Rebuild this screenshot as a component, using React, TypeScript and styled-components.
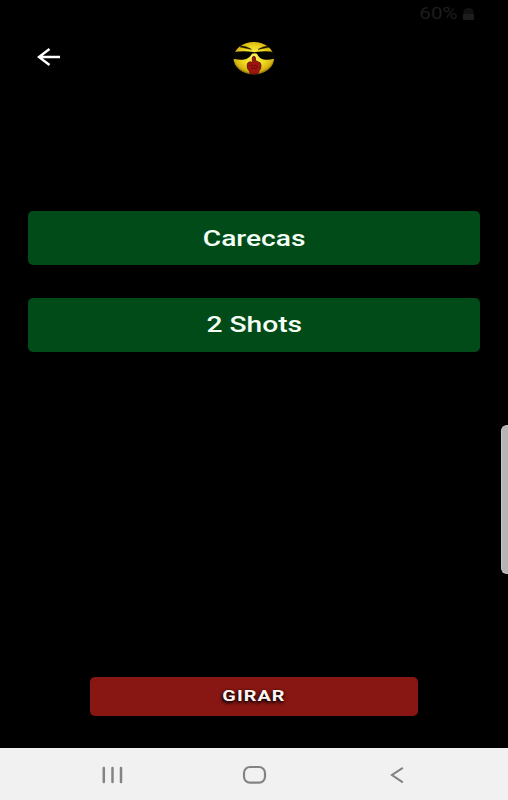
import React from "react";
import styled, { createGlobalStyle } from "styled-components";

const GlobalStyle = createGlobalStyle`
  * { box-sizing: border-box; }
  html, body { margin: 0; padding: 0; background: #000; }
  body { font-family: Roboto, "Liberation Sans", sans-serif; overflow: hidden; }
`;

const Screen = styled.main`
  position: relative;
  width: 508px;
  height: 800px;
  display: flex;
  flex-direction: column;
  background: #000;
  overflow: hidden;
`;

const StatusBar = styled.div`
  height: 28px;
  padding: 0 33px 1px 0;
  display: flex;
  align-items: center;
  justify-content: flex-end;
  gap: 4px;
  color: #1d1d1d;
`;

const Battery = styled.span`
  font-size: 16.5px;
  line-height: 20px;
  transform: scaleX(1.25);
  transform-origin: right center;
`;

const Header = styled.header`
  height: 60px;
  padding: 0 36px;
  display: grid;
  grid-template-columns: 1fr 42px 1fr;
  align-items: center;
`;

const BackButton = styled.button`
  width: 26px;
  height: 22px;
  padding: 0;
  border: 0;
  background: none;
  display: flex;
`;

const Options = styled.section`
  flex: 1;
  padding: 123px 28px 0;
  display: flex;
  flex-direction: column;
  gap: 32.5px;
`;

const OptionButton = styled.button`
  height: 54px;
  padding: 0;
  border: 0;
  border-radius: 5px;
  background: #014b19;
  color: #f4fff6;
  font: 500 22px/54px Roboto, sans-serif;
  flex: none;

  &:first-child {
    padding-top: 1px;
    line-height: 53px;
  }
`;

const Wide = styled.span<{ $scale: number }>`
  display: inline-block;
  transform: scaleX(${(p) => p.$scale});
`;

const SpinButton = styled.button`
  width: 328px;
  height: 39px;
  margin: 0 0 32.5px 90px;
  padding: 0;
  border: 0;
  border-radius: 5px;
  background: #881713;
  color: #fff4f4;
  font: 700 15px/38px Roboto, sans-serif;
  letter-spacing: 0.8px;
  text-shadow: 0 1px 3px #000, -1px 2px 3px rgba(0, 0, 0, 0.7);
  flex: none;
`;

const NavBar = styled.nav`
  height: 52px;
  flex: none;
  display: grid;
  grid-template-columns: 23px 1fr 16px;
  align-items: center;
  justify-items: center;
  padding: 1px 103px 0 101px;
  background: #f1f1f1;

  svg:nth-child(2) {
    margin-right: 5px;
  }
`;

const EdgeHandle = styled.div`
  position: absolute;
  right: 0;
  top: 425px;
  width: 7px;
  height: 149px;
  border-radius: 6px 0 0 6px;
  background: #b4b4b4;
  border: 1px solid #c8c8c8;
  border-right: 0;
`;

const BatteryIcon = () => (
  <svg width="13" height="14" viewBox="0 0 13 14">
    <path d="M1.5 7V3.5Q1.5 2 3 2H4V1H9V2H10Q11.5 2 11.5 3.5V7Z" fill="#111" />
    <path d="M1 7H12V13H1Z" fill="#1d1d1d" />
  </svg>
);

const ArrowIcon = () => (
  <svg width="26" height="22" viewBox="0 0 26 22" fill="none" stroke="#fff" strokeWidth="2.4">
    <path d="M24 10H3M13.5 2L3 10L13.5 18" />
  </svg>
);

const Emoji = () => (
  <svg width="42" height="34" viewBox="0 0 42 34">
    <defs>
      <radialGradient id="face" cx="50%" cy="45%" r="55%">
        <stop offset="0" stopColor="#fff45a" />
        <stop offset="0.55" stopColor="#eed91e" />
        <stop offset="0.85" stopColor="#d7b412" />
        <stop offset="1" stopColor="#846706" />
      </radialGradient>
    </defs>
    <ellipse cx="20.8" cy="17.2" rx="20.4" ry="16.2" fill="url(#face)" />
    <path d="M8 4.9Q14 5 18.5 8.4Q13 7.4 7 6.1ZM36 4.9Q30 5 25 8.4Q31 7.4 37 6.1Z" fill="#151000" stroke="#151000" strokeWidth=".4" />
    <path d="M0 11.1Q10 9.8 18.5 10.8Q21.5 11.5 24.5 10.8Q33 9.8 42 11.1V18H39.7Q37 19 32.5 18.7Q26 18.3 24 12.8Q21.5 11.8 19 12.8Q16 18.3 9.5 18.7Q5 19 2.2 18H0Z" fill="#050500" />
    <path d="M19.3 22V17Q19.4 15.3 20.8 15.3Q22.3 15.3 22.5 17V20Q24.5 19.5 25.2 21Q27.7 21 28 24Q28.4 28 26 30L24.8 33H17.3L16.5 30.2Q13.7 28.2 14.2 24Q14.2 21.6 16.3 21Q17.5 20 19.3 22Z" fill="#9e1512" stroke="#4b0905" strokeWidth=".7" />
    <path d="M17 25Q19 23 20.3 25.2M21 25Q22.5 23.2 24 25.2M18 28Q20 26 22.5 27.5L25 26" fill="none" stroke="#5b0707" strokeWidth=".8" />
  </svg>
);

const NavIcons = () => (
  <>
    <svg width="23" height="18" viewBox="0 0 23 18" fill="none" stroke="#838383" strokeWidth="2.5" strokeLinecap="round">
      <path d="M2.8 2V16M11.5 2V16M20 2V16" />
    </svg>
    <svg width="25" height="20" viewBox="0 0 25 20" fill="none" stroke="#838383" strokeWidth="2.2">
      <rect x="2" y="2" width="21" height="15.7" rx="6" />
    </svg>
    <svg width="16" height="18" viewBox="0 0 16 18" fill="none" stroke="#838383" strokeWidth="2.1">
      <path d="M13.8 1.8L3 9L13.8 16.3" />
    </svg>
  </>
);

export default function App() {
  return (
    <>
      <GlobalStyle />
      <Screen>
        <StatusBar>
          <Battery>60%</Battery>
          <BatteryIcon />
        </StatusBar>
        <Header>
          <BackButton aria-label="Voltar"><ArrowIcon /></BackButton>
          <Emoji />
        </Header>
        <Options>
          <OptionButton><Wide $scale={1.28}>Carecas</Wide></OptionButton>
          <OptionButton><Wide $scale={1.28}>2 Shots</Wide></OptionButton>
        </Options>
        <SpinButton><Wide $scale={1.32}>GIRAR</Wide></SpinButton>
        <NavBar><NavIcons /></NavBar>
        <EdgeHandle />
      </Screen>
    </>
  );
}
